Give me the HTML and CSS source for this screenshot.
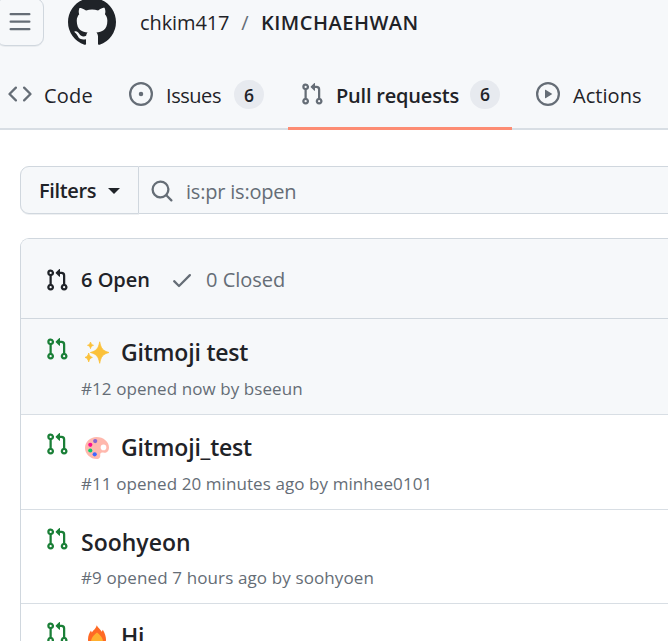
FILE: index.html
```html
<!DOCTYPE html>
<html lang="en">
<head>
<meta charset="utf-8">
<title>Pull requests</title>
<link rel="stylesheet" href="styles.css">
</head>
<body>
<svg class="defs" aria-hidden="true">
  <symbol id="pr" viewBox="0 0 16 16"><path d="M1.5 3.25a2.25 2.25 0 1 1 3 2.122v5.256a2.251 2.251 0 1 1-1.5 0V5.372A2.25 2.25 0 0 1 1.5 3.25Zm5.677-.177L9.573.677A.25.25 0 0 1 10 .854V2.5h1A2.5 2.5 0 0 1 13.5 5v5.628a2.251 2.251 0 1 1-1.5 0V5a1 1 0 0 0-1-1h-1v1.646a.25.25 0 0 1-.427.177L7.177 3.427a.25.25 0 0 1 0-.354ZM3.75 2.5a.75.75 0 1 0 0 1.5.75.75 0 0 0 0-1.5Zm0 9.5a.75.75 0 1 0 0 1.5.75.75 0 0 0 0-1.5Zm8.25.75a.75.75 0 1 0 1.5 0 .75.75 0 0 0-1.5 0Z"/></symbol>
</svg>
<header class="header">
  <div class="topbar">
    <button class="menu" aria-label="Menu"><svg class="icon" viewBox="0 0 16 16"><path d="M1 2.75A.75.75 0 0 1 1.75 2h12.5a.75.75 0 0 1 0 1.5H1.75A.75.75 0 0 1 1 2.75Zm0 5A.75.75 0 0 1 1.75 7h12.5a.75.75 0 0 1 0 1.5H1.75A.75.75 0 0 1 1 7.75ZM1.75 12h12.5a.75.75 0 0 1 0 1.5H1.75a.75.75 0 0 1 0-1.5Z"/></svg></button>
    <svg class="logo" viewBox="0 0 16 16"><path d="M8 0c4.42 0 8 3.58 8 8a8.013 8.013 0 0 1-5.45 7.59c-.4.08-.55-.17-.55-.38 0-.27.01-1.13.01-2.2 0-.75-.25-1.23-.54-1.48 1.78-.2 3.65-.88 3.65-3.95 0-.88-.31-1.59-.82-2.15.08-.2.36-1.02-.08-2.12 0 0-.67-.22-2.2.82-.64-.18-1.32-.27-2-.27-.68 0-1.36.09-2 .27-1.53-1.03-2.2-.82-2.2-.82-.44 1.1-.16 1.92-.08 2.12-.51.56-.82 1.28-.82 2.15 0 3.06 1.86 3.75 3.64 3.95-.23.2-.44.55-.51 1.07-.46.21-1.61.55-2.33-.66-.15-.24-.6-.83-1.23-.82-.67.01-.27.38.01.53.34.19.73.9.82 1.13.16.45.68 1.31 2.69.94 0 .67.01 1.3.01 1.49 0 .21-.15.45-.55.38A7.995 7.995 0 0 1 0 8c0-4.42 3.58-8 8-8Z"/></svg>
    <span class="owner">chkim417</span><span class="slash">/</span><span class="repo">KIMCHAEHWAN</span>
  </div>
  <nav class="nav">
    <a class="tab tab-code"><svg class="icon" viewBox="0 0 16 16"><path d="m11.28 3.22 4.25 4.25a.75.75 0 0 1 0 1.06l-4.25 4.25a.749.749 0 0 1-1.06-1.06L13.94 8l-3.72-3.72a.749.749 0 0 1 1.06-1.06Zm-6.56 0a.749.749 0 0 1 1.06 1.06L2.06 8l3.72 3.72a.749.749 0 0 1-1.06 1.06L.47 8.53a.75.75 0 0 1 0-1.06Z"/></svg><span class="label">Code</span></a>
    <a class="tab tab-issues"><svg class="icon" viewBox="0 0 16 16"><path d="M8 9.5a1.5 1.5 0 1 0 0-3 1.5 1.5 0 0 0 0 3Z"/><path d="M8 0a8 8 0 1 1 0 16A8 8 0 0 1 8 0ZM1.5 8a6.5 6.5 0 1 0 13 0 6.5 6.5 0 0 0-13 0Z"/></svg><span class="label">Issues</span><span class="count">6</span></a>
    <a class="tab tab-pulls"><svg class="icon"><use href="#pr"/></svg><span class="label">Pull requests</span><span class="count">6</span></a>
    <a class="tab tab-actions"><svg class="icon" viewBox="0 0 16 16"><path d="M8 0a8 8 0 1 1 0 16A8 8 0 0 1 8 0ZM1.5 8a6.5 6.5 0 1 0 13 0 6.5 6.5 0 0 0-13 0Zm4.879-2.773 4.264 2.559a.25.25 0 0 1 0 .428l-4.264 2.559A.25.25 0 0 1 6 10.559V5.442a.25.25 0 0 1 .379-.215Z"/></svg><span class="label">Actions</span></a>
  </nav>
</header>
<main class="main">
  <div class="search">
    <button class="filters"><span class="filters-label">Filters</span><span class="caret"></span></button>
    <div class="query"><svg class="icon" viewBox="0 0 16 16"><path d="M10.68 11.74a6 6 0 0 1-7.922-8.982 6 6 0 0 1 8.982 7.922l3.04 3.04a.749.749 0 0 1-1.06 1.06ZM11.5 7a4.499 4.499 0 1 0-8.997 0A4.499 4.499 0 0 0 11.5 7Z"/></svg><span class="query-text">is:pr is:open</span></div>
  </div>
  <section class="list">
    <div class="list-head">
      <svg class="icon dark"><use href="#pr"/></svg><span class="open">6 Open</span>
      <svg class="icon check" viewBox="0 0 16 16"><path d="M13.78 4.22a.75.75 0 0 1 0 1.06l-7.25 7.25a.75.75 0 0 1-1.06 0L2.22 9.28a.751.751 0 0 1 1.06-1.06L6 10.94l6.72-6.72a.75.75 0 0 1 1.06 0Z"/></svg><span class="closed">0 Closed</span>
    </div>
    <article class="row row-active">
      <svg class="icon green"><use href="#pr"/></svg>
      <div class="body">
        <h2 class="title"><svg class="emoji" viewBox="0 0 24 24"><path fill="#fbc13a" d="M14.7.8C16 7.4 17.7 9.8 24 11.5c-6.3 1.7-8 4.1-9.3 10.8-1.3-6.7-3-9.1-9.3-10.8C11.700 9.800 13.400 7.400 14.700.8ZM5.500 1c.6 2.100 1.200 2.700 3 3.300-1.800.6-2.400 1.200-3 3.300-.6-2.100-1.200-2.700-3-3.300 1.800-.6 2.400-1.200 3-3.300ZM3.700 12c.7 2.800 1.500 3.700 3.700 4.400-2.200.7-3 1.600-3.700 4.500-.7-2.900-1.500-3.800-3.700-4.500 2.200-.7 3-1.600 3.700-4.400Z" stroke="#fbc13a" stroke-width=".8" stroke-linejoin="round"/></svg><span>Gitmoji test</span></h2>
        <p class="meta">#12 opened now by bseeun</p>
      </div>
    </article>
    <article class="row">
      <svg class="icon green"><use href="#pr"/></svg>
      <div class="body">
        <h2 class="title"><svg class="emoji" viewBox="0 0 24 24"><path fill="#ffb8ad" d="M11.500 1C18.500 1 24 6 24 11.500c0 4-2.500 5.500-5 5.200-2-.3-4 .2-3.800 2 .2 1.200.2 4.300-3.400 4.300C5.300 23 0 18 0 12S5 1 11.500 1Z"/><circle cx="18.500" cy="11.400" r="2.800" fill="#fff"/><circle cx="10.200" cy="5.100" r="2.100" fill="#8765d1"/><circle cx="5.300" cy="8.800" r="2.100" fill="#fb0f91"/><circle cx="5.300" cy="14.500" r="2.100" fill="#0bce6c"/><circle cx="9.700" cy="18.300" r="2.100" fill="#4067ff"/></svg><span>Gitmoji_test</span></h2>
        <p class="meta">#11 opened 20 minutes ago by minhee0101</p>
      </div>
    </article>
    <article class="row row-short">
      <svg class="icon green"><use href="#pr"/></svg>
      <div class="body">
        <h2 class="title title-plain"><span>Soohyeon</span></h2>
        <p class="meta meta-tight">#9 opened 7 hours ago by soohyoen</p>
      </div>
    </article>
    <article class="row row-last">
      <svg class="icon green"><use href="#pr"/></svg>
      <div class="body">
        <h2 class="title"><svg class="emoji" viewBox="0 0 24 24"><path fill="#ff6a24" d="M11.800.2c.8 2.500 4 4.200 5 6.600l1-2c2 3.200 3.200 6.800 3.200 9.700 0 5.300-3.800 9-9 9s-9-3.700-9-9c0-4 1.500-7 3-9l.8 2.100C8.200 5 11.300 3.300 11.800.2Z"/><path fill="#ffb02e" d="M12 7.500c2.500 2 6 5 6 9.500 0 4-2.500 6.500-6 6.500s-6-2.500-6-6.500c0-4.500 3.500-7.500 6-9.500Z"/></svg><span>Hi</span></h2>
      </div>
    </article>
  </section>
</main>
</body>
</html>
```
FILE: styles.css
```css
* { box-sizing: border-box; }
body {
  margin: 0;
  height: 641px;
  overflow: hidden;
  background: #fff;
  color: #1f2328;
  font-family: "Open Sans", "Noto Sans", sans-serif;
  font-size: 20px;
}
button { font: inherit; color: inherit; padding: 0; }
span, p { white-space: nowrap; }
.defs { display: block; width: 0; height: 0; position: absolute; }
.icon { display: block; width: 24px; height: 24px; flex: none; fill: #656d76; }
.dark { fill: #1f2328; }
.green { fill: #1a7f37; }

.header { height: 130px; background: #f6f8fa; box-shadow: inset 0 -2px #d8dee4; overflow: hidden; }
.topbar { display: flex; align-items: center; height: 48px; margin-top: -2px; }
.menu {
  display: flex; align-items: center; justify-content: flex-end;
  width: 48px; height: 48px; margin-left: -4px; padding-right: 11px;
  border: 1px solid #d0d7de; border-radius: 9px; background: #f6f8fa;
  box-shadow: 0 1px 0 #e9ecef;
}
.logo { width: 48px; height: 48px; margin-left: 24px; fill: #1f2328; flex: none; }
.owner { width: 89px; margin-left: 24px; letter-spacing: -.1px; }
.slash { width: 32px; text-align: center; color: #656d76; }
.repo { font-weight: 580; letter-spacing: .5px; }

.nav { display: flex; height: 84px; padding-left: 8px; }
.tab { display: flex; align-items: center; height: 84px; padding-bottom: 2px; flex: none; }
.tab .icon { margin-top: 14px; }
.tab .label { margin: 17px 0 0 12px; letter-spacing: .2px; }
.count {
  display: flex; align-items: center; justify-content: center;
  width: 30px; height: 29px; margin: 15px 0 0 12px;
  border-radius: 15px; background: #e7eaef; font-size: 17.5px; font-weight: 550;
}
.tab-code { width: 121px; }
.tab-issues { width: 159px; }
.tab-issues .label { width: 56px; margin-left: 13px; letter-spacing: -.45px; }
.tab-pulls { width: 224px; padding-left: 12px; border-bottom: 3px solid #fd8c73; padding-bottom: 0; }
.tab-pulls .label { width: 122px; font-weight: 580; letter-spacing: -.2px; }
.tab-actions { margin-left: 24px; }
.tab-actions .label { margin-left: 13px; letter-spacing: .05px; }

.main { height: 511px; overflow: hidden; padding: 36px 0 0 20px; }
.search { display: flex; height: 48px; }
.filters {
  display: flex; align-items: center; width: 119px; padding-left: 18px;
  border: 1px solid #d0d7de; border-radius: 9px 0 0 9px; background: #f6f8fa;
  box-shadow: 0 1px 0 #eef0f2;
}
.filters-label { width: 57px; font-weight: 580; text-align: left; letter-spacing: -.35px; }
.caret { margin: 1px 0 0 12px; border: 6px solid transparent; border-top-color: #1f2328; border-bottom: 0; }
.query {
  flex: 1; display: flex; align-items: center; padding: 2px 0 0 11px;
  border: solid #d0d7de; border-width: 1px 0; background: #f6f8fa; color: #656d76;
}
.query-text { margin-left: 12px; letter-spacing: -.2px; }

.list { margin-top: 24px; border: solid #d0d7de; border-width: 1px 0 0 1px; border-radius: 9px 0 0; overflow: hidden; }
.list-head { display: flex; align-items: center; height: 80px; padding: 2px 0 0 24px; background: #f6f8fa; border-bottom: 1px solid #d0d7de; }
.open { width: 69px; margin-left: 12px; font-weight: 580; }
.check { margin-left: 20px; }
.closed { margin-left: 12px; color: #656d76; }
.row { display: flex; height: 95px; padding: 17px 0 0 24px; border-bottom: 1px solid #d8dee4; }
.row-active { height: 96px; padding-top: 18px; background: #f6f8fa; }
.row-short { height: 94px; }
.row-last { height: 38px; border: 0; }
.body { margin-left: 12px; }
.title { display: flex; align-items: center; height: 31px; margin: 0; font-size: 23px; font-weight: 580; letter-spacing: -.2px; }
.title span { line-height: 30px; margin-top: -1px; }
.title-plain { letter-spacing: 0; }
.emoji { width: 24px; height: 24px; margin: 1px 12px 0 4px; }
.meta { margin: 7px 0 0; height: 27px; line-height: 27px; font-size: 17px; letter-spacing: .08px; color: #656d76; }
.meta-tight { margin-top: 6px; letter-spacing: .12px; }
```
